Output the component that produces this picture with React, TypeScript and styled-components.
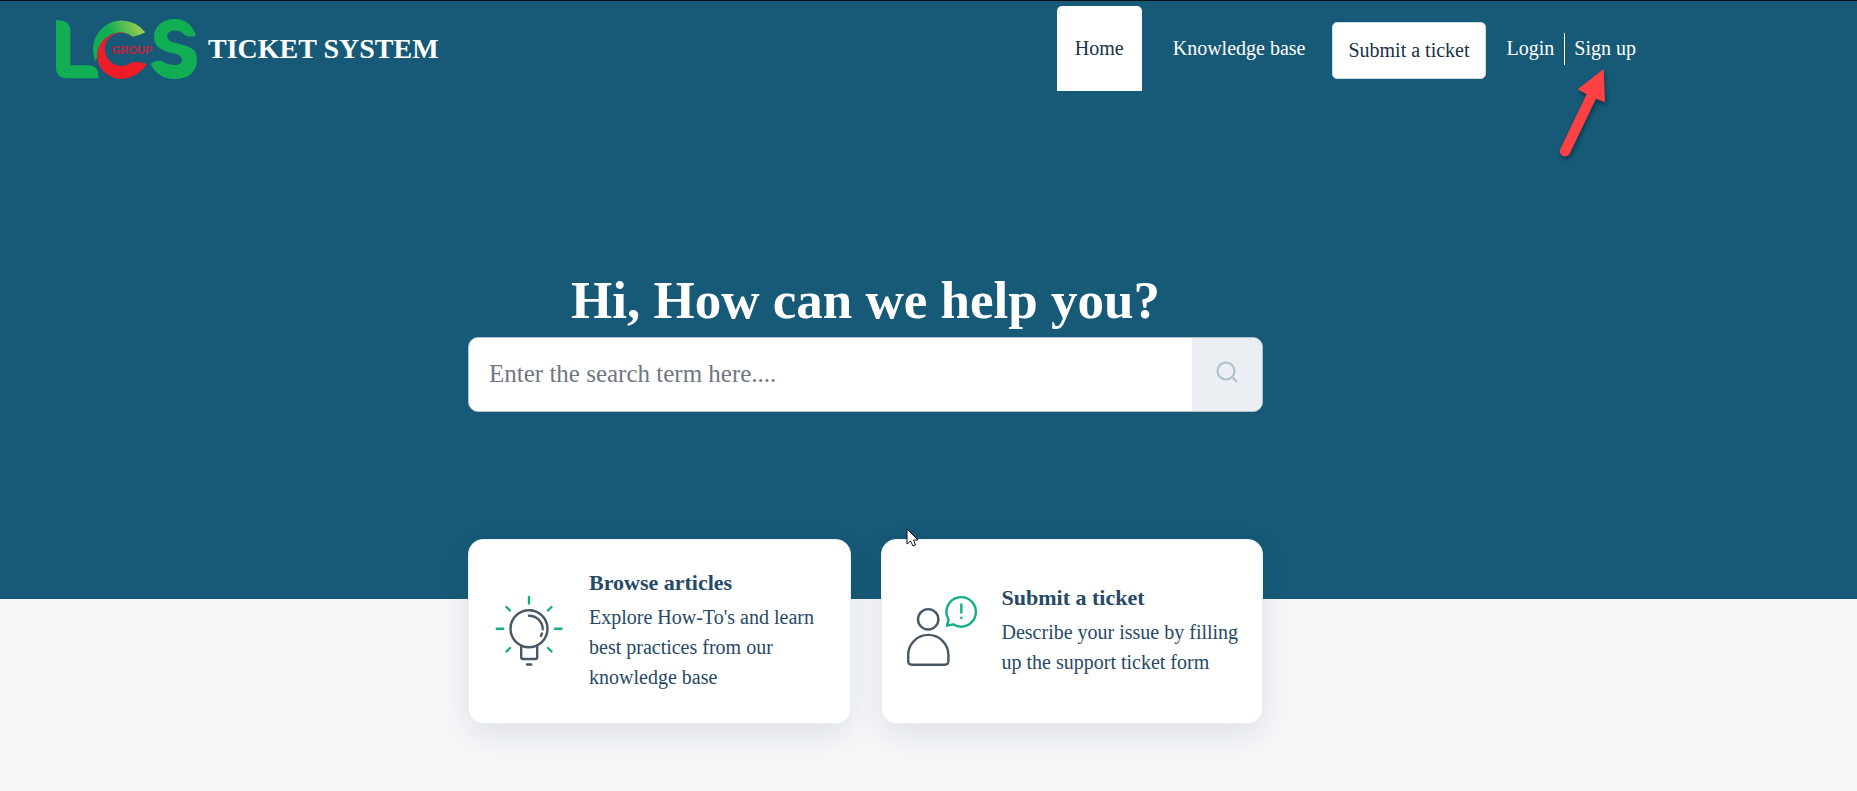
import React from "react";
import styled, { createGlobalStyle } from "styled-components";

const GlobalStyle = createGlobalStyle`
  *, *::before, *::after { box-sizing: border-box; }
  body {
    margin: 0;
    background: #f5f7f9;
    color: #264966;
    font-family: "Liberation Serif", "Times New Roman", serif;
    font-size: 20px;
    line-height: 30px;
  }
  a { color: inherit; text-decoration: none; }
`;

const Hero = styled.div`
  background: #165a77;
  border-top: 1px solid #0b0f14;
  padding: 5px 126px 60px 0;
`;

const Header = styled.header`
  display: flex;
  align-items: flex-start;
  justify-content: space-between;
  padding: 0 95px 0 56px;
`;

const Brand = styled.a`
  display: flex;
  align-items: center;
  gap: 10px;
  height: 85px;
  color: #fff;
  font-size: 28px;
  font-weight: 700;
  white-space: nowrap;
`;

const Nav = styled.nav`
  display: flex;
  align-items: center;
  height: 85px;
  color: #fff;
  white-space: nowrap;
`;

const NavLink = styled.a<{ $active?: boolean }>`
  display: flex;
  align-items: center;
  height: 100%;
  padding: 0 18px 2px;
  border-radius: 5px 5px 0 0;
  margin-right: 13px;
  background: ${(p) => (p.$active ? "#fff" : "transparent")};
  color: ${(p) => (p.$active ? "#183247" : "#fff")};
`;

const NavButton = styled.button`
  height: 57px;
  margin: 4px 21px 0 -4px;
  padding: 0 15px 2px;
  border: 1px solid #cfd7df;
  border-radius: 5px;
  background: #fff;
  color: #183247;
  font: inherit;
`;

const Account = styled.div`
  position: relative;
  display: flex;
  align-items: center;
`;

const AccountLink = styled.a`
  padding-bottom: 2px;
  & + & {
    margin-left: 10px;
    padding-left: 9px;
    border-left: 1px solid #fff;
  }
`;

const Pointer = styled.svg`
  position: absolute;
  top: 34px;
  right: 22px;
  pointer-events: none;
  overflow: visible;
  filter: drop-shadow(1px 3px 2px rgba(0, 0, 0, 0.4));
`;

const Search = styled.form`
  max-width: 795px;
  margin: 176px auto 127px;
`;

const Title = styled.h1`
  margin: 0 0 4px;
  color: #fff;
  font-size: 53px;
  line-height: 66px;
  text-align: center;
`;

const SearchBox = styled.div`
  display: flex;
  height: 75px;
  border: 1px solid #b4c2cd;
  border-radius: 10px;
  background: #fff;
  overflow: hidden;
`;

const SearchInput = styled.input`
  flex: 1;
  min-width: 0;
  padding: 0 20px 2px;
  border: 0;
  outline: 0;
  background: transparent;
  color: #183247;
  font: inherit;
  font-size: 25px;
  &::placeholder { color: #6f7780; opacity: 1; }
`;

const SearchButton = styled.button`
  display: flex;
  align-items: center;
  justify-content: center;
  width: 70px;
  padding: 0 0 6px;
  border: 0;
  background: #ebeef3;
`;

const CardArea = styled.main`
  padding: 0 126px 60px 0;
`;

const Cards = styled.div`
  display: grid;
  grid-template-columns: 1fr 1fr;
  gap: 30px;
  max-width: 795px;
  margin: -60px auto 0;
`;

const Card = styled.a`
  position: relative;
  display: flex;
  align-items: center;
  gap: 19px;
  min-height: 185px;
  padding: 0 20px 2px 21px;
  border: 1px solid #ebeff3;
  border-radius: 15px;
  background: #fff;
  box-shadow: 0 10px 30px rgba(30, 40, 60, 0.1);
`;

const CardIcon = styled.svg`
  flex: none;
  width: 80px;
  height: 80px;
  fill: none;
  stroke: #475867;
  stroke-width: 2.4;
  stroke-linecap: round;
  stroke-linejoin: round;
`;

const CardBody = styled.div`
  padding-bottom: 1px;
`;

const CardTitle = styled.h2`
  margin: 0 0 4px;
  font-size: 22px;
  line-height: 30px;
`;

const CardText = styled.p`
  margin: 0;
`;

const Cursor = styled.svg`
  position: absolute;
  top: -12px;
  left: 24px;
  pointer-events: none;
`;

const Logo = () => (
  <svg width="142" height="61" viewBox="0 0 142 61" role="img" aria-label="LCS Group">
    <defs>
      <linearGradient id="leaf" x1="0" y1="0.5" x2="1" y2="0.2">
        <stop offset="0.35" stopColor="#12ae54" />
        <stop offset="1" stopColor="#a9d04b" />
      </linearGradient>
    </defs>
    <path fill="#12ae54" d="M0 2.300C9 1.600 14.300 5 14.300 12V47.300H32C39 47.300 43 51 42.500 60.300H10C4 60.300 0 56.500 0 50Z" />
    <path fill="url(#leaf)" d="M39.500 43A28.800 28.800 0 0 1 65.700 2.500Q80 3 89.300 14.300Q84 17.500 76.700 18.700Q70 14.500 64 14.500A24 24 0 0 0 41 40Z" />
    <path fill="#ed1c27" d="M76 18.500Q71 14.300 64 14.300A25 23.400 0 0 0 65.700 61Q81 60 91.300 46Q83 43.500 75.700 44.300A16.600 16.600 0 1 1 76 18.500Z" />
    <path
      fill="#12ae54"
      d="M140 18C137 7 129 1 119 1C106 1 98 9 98 19C98 28 104 32.500 117.300 35.300C123 36.600 126 38.500 126 42C126 45.500 123 47 119 47C114 47 110 45.500 106.700 43.500C102.500 42 98 43 94.700 46C99 55.500 107 61 119 61C133 61 141 53 141 42C141 33 137 29.500 127 27L118 24.500C113.500 23.300 111.300 21.500 111.300 18.500C111.300 14.500 114.500 12.500 119 12.500C123.500 12.500 127 14.500 130 18C133 18.700 137 18.700 140 18Z"
    />
    <text x="56" y="36" fill="#c2243c" fontFamily="Liberation Sans, sans-serif" fontSize="11" fontWeight="700">GROUP</text>
  </svg>
);

const BulbIcon = () => (
  <CardIcon viewBox="0 0 80 80" aria-hidden="true">
    <circle cx="39" cy="37.700" r="18.500" />
    <path d="M39 24.700A13.600 13.600 0 0 1 52.700 38.300M51.900 42.600L50.900 45" />
    <path d="M31.200 55.500V66Q31.200 68 33.200 68H45.200Q47.200 68 47.200 66V55.500M37 73.500H41.200" />
    <path
      stroke="#12ad8b"
      d="M39 6V12.500M6.700 37.700H13.300M65 37.700H71.500M16.500 16L20 19.500M61.500 16L58 19.500M16.500 60.500L20 57M61.500 60.500L58 57"
    />
  </CardIcon>
);

const AgentIcon = () => (
  <CardIcon viewBox="0 0 80 80" aria-hidden="true">
    <circle cx="25.200" cy="28.300" r="10.200" />
    <path d="M5.200 64A20.100 20.100 0 0 1 45.400 64V70Q45.400 73.700 41.700 73.700H8.900Q5.200 73.700 5.200 70Z" />
    <g stroke="#12ad8b">
      <path d="M45.600 28.500A14.700 14.700 0 1 1 50.300 33.300L43.900 34.700Z" />
      <path d="M58.300 13.500V21.500M58.300 26.700V27" />
    </g>
  </CardIcon>
);

export default function App() {
  return (
    <>
      <GlobalStyle />
      <Hero>
        <Header>
          <Brand href="#"><Logo />TICKET SYSTEM</Brand>
          <Nav>
            <NavLink href="#" $active>Home</NavLink>
            <NavLink href="#">Knowledge base</NavLink>
            <NavButton type="button">Submit a ticket</NavButton>
            <Account>
              <AccountLink href="#">Login</AccountLink>
              <AccountLink href="#">Sign up</AccountLink>
              <Pointer width="56" height="92" viewBox="0 0 56 92" aria-hidden="true">
                <path
                  d="M45.700 2L47 35.300L38 31.700L11.700 86.400A5.100 5.100 0 0 1 2.400 82.100L28.700 27.300L19.700 22.300Z"
                  fill="#ff4143"
                />
              </Pointer>
            </Account>
          </Nav>
        </Header>
        <Search onSubmit={(e) => e.preventDefault()}>
          <Title>Hi, How can we help you?</Title>
          <SearchBox>
            <SearchInput type="text" aria-label="Search" placeholder="Enter the search term here...." />
            <SearchButton type="submit" aria-label="Search">
              <svg width="22" height="22" viewBox="0 0 22 22" fill="none" stroke="#afbfca" strokeWidth="2">
                <circle cx="10" cy="10" r="8.500" />
                <path d="M15.800 15.800L21 21" />
              </svg>
            </SearchButton>
          </SearchBox>
        </Search>
      </Hero>
      <CardArea>
        <Cards>
          <Card href="#">
            <BulbIcon />
            <CardBody>
              <CardTitle>Browse articles</CardTitle>
              <CardText>Explore How-To's and learn best practices from our knowledge base</CardText>
            </CardBody>
          </Card>
          <Card href="#">
            <AgentIcon />
            <CardBody>
              <CardTitle>Submit a ticket</CardTitle>
              <CardText>Describe your issue by filling up the support ticket form</CardText>
            </CardBody>
            <Cursor width="14" height="20" viewBox="0 0 14 20" aria-hidden="true">
              <path d="M1 1V16L4.500 13L7 18L9.500 17L7.500 12H12Z" fill="#fff" stroke="#111" />
            </Cursor>
          </Card>
        </Cards>
      </CardArea>
    </>
  );
}
